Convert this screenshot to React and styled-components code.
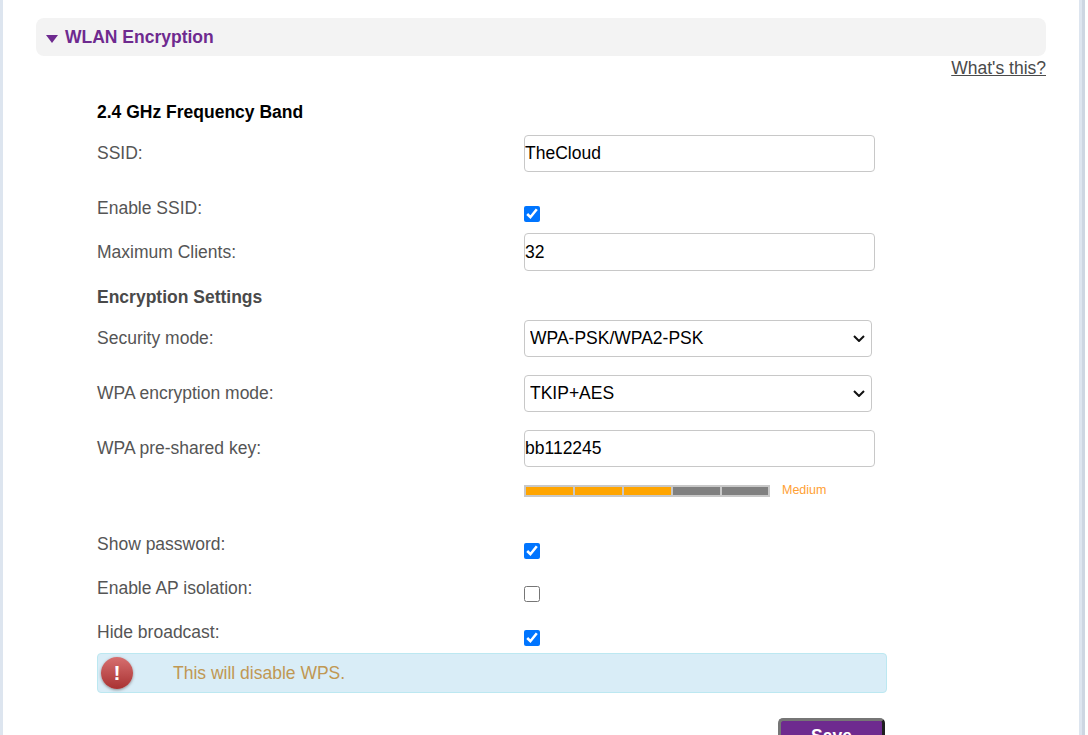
import styled, { createGlobalStyle } from "styled-components";

const GlobalStyle = createGlobalStyle`
  html, body {
    margin: 0;
    padding: 0;
    height: 100%;
    overflow: hidden;
    background: #fff;
  }
  body {
    font-family: "Liberation Sans", Arial, sans-serif;
  }
`;

const chevron =
  "data:image/svg+xml,%3Csvg xmlns='http://www.w3.org/2000/svg' width='12' height='7'%3E%3Cpath d='M1 1l5 5 5-5' fill='none' stroke='%23111' stroke-width='2'/%3E%3C/svg%3E";

const Page = styled.div`
  width: 1088px;
  height: 735px;
  box-sizing: border-box;
  overflow: hidden;
  display: flex;
  background: #fff;
`;

const LeftStrip = styled.div`
  width: 3px;
  flex-shrink: 0;
  background: #dde5ef;
`;

const RightStrip = styled.div`
  width: 6px;
  margin-left: 33px;
  flex-shrink: 0;
  background: linear-gradient(90deg, #dde5ef 50%, #cdd6e2 50%);
`;

const Content = styled.div`
  width: 1010px;
  margin-left: 33px;
  padding-top: 18px;
  flex-shrink: 0;
`;

const SectionHeader = styled.div`
  height: 38px;
  display: flex;
  align-items: center;
  padding-left: 10px;
  gap: 7px;
  background: #f3f3f3;
  border-radius: 8px;
  color: #6e2a8f;
  font-size: 17.5px;
  font-weight: bold;
`;

const Caret = styled.span`
  width: 0;
  height: 0;
  margin-top: 4px;
  border-left: 6px solid transparent;
  border-right: 6px solid transparent;
  border-top: 8px solid #6e2a8f;
`;

const HelpRow = styled.div`
  display: flex;
  justify-content: flex-end;
  height: 24px;
  line-height: 24px;
`;

const HelpLink = styled.a`
  color: #4a4a4a;
  font-size: 17.5px;
  text-decoration: underline;
`;

const Form = styled.div`
  margin-left: 61px;
  width: 790px;
  padding-top: 22px;
`;

const Heading = styled.div`
  height: ${(props) => props.height}px;
  line-height: 20px;
  font-size: 17.5px;
  font-weight: bold;
  color: ${(props) => props.color};
`;

const Row = styled.div`
  display: grid;
  grid-template-columns: 427px 1fr;
  height: ${(props) => props.height}px;
  align-items: start;
`;

const Label = styled.label`
  font-size: 17.5px;
  line-height: 18px;
  color: #555;
  padding-top: ${(props) => props.top || 0}px;
`;

const TextField = styled.input`
  box-sizing: border-box;
  width: 351px;
  height: ${(props) => props.height || 37}px;
  padding: 0;
  border: 1px solid #c8c8c8;
  border-radius: 4px;
  outline: none;
  font-family: inherit;
  font-size: 17.5px;
  color: #000;
  background: #fff;
`;

const Dropdown = styled.select`
  box-sizing: border-box;
  width: 348px;
  height: 37px;
  padding: 0 5px 2px;
  border: 1px solid #c8c8c8;
  border-radius: 4px;
  outline: none;
  appearance: none;
  font-family: inherit;
  font-size: 17.5px;
  color: #000;
  background: #fff url("${chevron}") no-repeat right 6px center;
`;

const Check = styled.input.attrs({ type: "checkbox" })`
  width: 16px;
  height: 16px;
  margin: ${(props) => props.top}px 0 0 0;
  display: block;
`;

const StrengthRow = styled.div`
  display: flex;
  align-items: center;
  margin-left: 427px;
  height: 68px;
  padding-bottom: 20px;
  box-sizing: border-box;
  gap: 12px;
`;

const StrengthBar = styled.div`
  box-sizing: border-box;
  width: 246px;
  height: 12px;
  display: flex;
  gap: 2px;
  padding: 2px;
  background: #c8c8c8;
`;

const Segment = styled.span`
  flex: 0 0 47px;
  background: ${(props) => (props.$on ? "#ffa500" : "#808080")};
  &:last-child {
    flex-basis: 46px;
  }
`;

const StrengthText = styled.span`
  margin-bottom: 2px;
  font-size: 12.5px;
  color: #ffa033;
`;

const Alert = styled.div`
  box-sizing: border-box;
  width: 790px;
  height: 40px;
  margin-top: 7px;
  display: flex;
  align-items: center;
  padding-left: 3px;
  background: #d9edf7;
  border: 1px solid #bce8f1;
  border-radius: 4px;
`;

const AlertIcon = styled.span`
  width: 32px;
  height: 32px;
  border-radius: 50%;
  flex-shrink: 0;
  display: flex;
  align-items: center;
  justify-content: center;
  background: linear-gradient(#d66f6f, #a93232);
  box-shadow: 0 1px 3px rgba(80, 60, 60, 0.55);
  color: #fff;
  font-size: 21px;
  font-weight: bold;
`;

const AlertText = styled.span`
  margin-left: 40px;
  font-size: 17.5px;
  color: #c09853;
`;

const Actions = styled.div`
  display: flex;
  justify-content: flex-end;
  width: 788px;
  margin-top: 25px;
`;

const SaveButton = styled.button`
  box-sizing: border-box;
  width: 107px;
  height: 36px;
  padding: 0;
  border: 3px solid;
  border-color: #767676 #1f1f1f #1f1f1f #767676;
  border-radius: 5px;
  background: #6e2a8f;
  color: #fff;
  font-family: inherit;
  font-size: 17.5px;
  font-weight: bold;
`;

const segments = [true, true, true, false, false];

export default function App() {
  return (
    <Page>
      <GlobalStyle />
      <LeftStrip />
      <Content>
        <SectionHeader>
          <Caret />
          WLAN Encryption
        </SectionHeader>
        <HelpRow>
          <HelpLink href="#">What's this?</HelpLink>
        </HelpRow>
        <Form>
          <Heading height={33} color="#000">2.4 GHz Frequency Band</Heading>
          <Row height={64}>
            <Label top={9}>SSID:</Label>
            <TextField defaultValue="TheCloud" />
          </Row>
          <Row height={34}>
            <Label>Enable SSID:</Label>
            <Check top={7} defaultChecked />
          </Row>
          <Row height={54}>
            <Label top={10}>Maximum Clients:</Label>
            <TextField height={38} defaultValue="32" />
          </Row>
          <Heading height={33} color="#4a4a4a">Encryption Settings</Heading>
          <Row height={55}>
            <Label top={9}>Security mode:</Label>
            <Dropdown defaultValue="WPA-PSK/WPA2-PSK">
              <option>WPA-PSK/WPA2-PSK</option>
            </Dropdown>
          </Row>
          <Row height={55}>
            <Label top={9}>WPA encryption mode:</Label>
            <Dropdown defaultValue="TKIP+AES">
              <option>TKIP+AES</option>
            </Dropdown>
          </Row>
          <Row height={37}>
            <Label top={9}>WPA pre-shared key:</Label>
            <TextField defaultValue="bb112245" />
          </Row>
          <StrengthRow>
            <StrengthBar>
              {segments.map((on, i) => (
                <Segment key={i} $on={on} />
              ))}
            </StrengthBar>
            <StrengthText>Medium</StrengthText>
          </StrengthRow>
          <Row height={44}>
            <Label>Show password:</Label>
            <Check top={8} defaultChecked />
          </Row>
          <Row height={44}>
            <Label>Enable AP isolation:</Label>
            <Check top={7} />
          </Row>
          <Row height={23}>
            <Label>Hide broadcast:</Label>
            <Check top={7} defaultChecked />
          </Row>
          <Alert>
            <AlertIcon>!</AlertIcon>
            <AlertText>This will disable WPS.</AlertText>
          </Alert>
          <Actions>
            <SaveButton>Save</SaveButton>
          </Actions>
        </Form>
      </Content>
      <RightStrip />
    </Page>
  );
}
